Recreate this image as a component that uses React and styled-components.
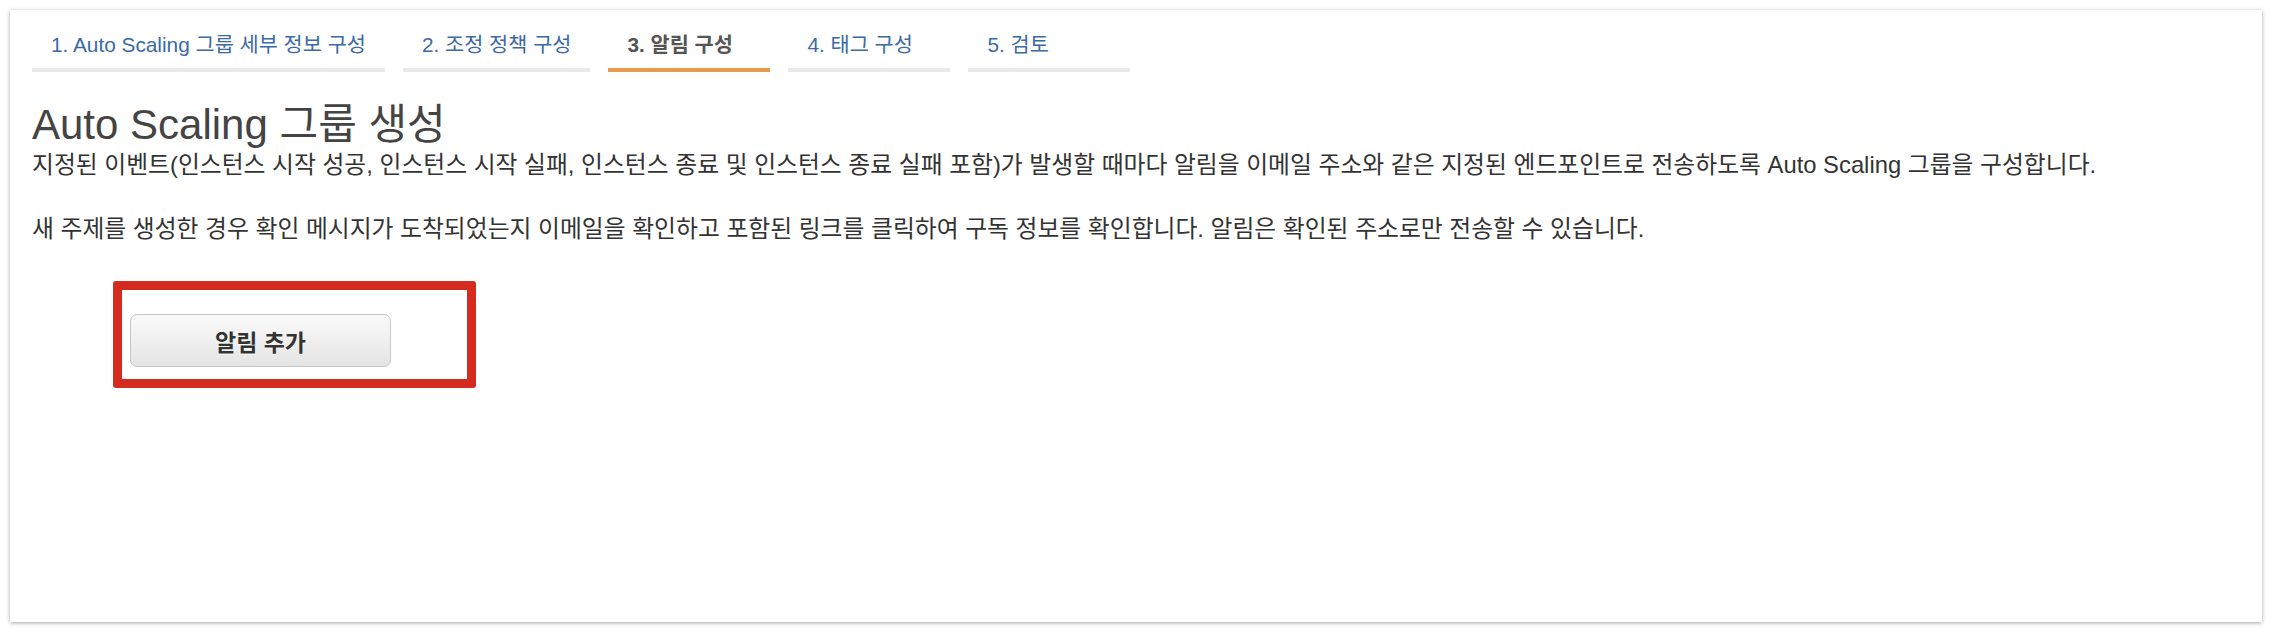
import React from 'react'
import styled, { createGlobalStyle } from 'styled-components'

const GlobalStyle = createGlobalStyle`
  html, body {
    margin: 0;
    padding: 0;
    background: #fff;
  }

  body {
    font-family: "Liberation Sans", "Noto Sans CJK KR", sans-serif;
    color: #333;
  }
`

const Card = styled.div`
  box-sizing: border-box;
  margin: 10px;
  height: 612px;
  padding: 0 22px;
  background: #fff;
  box-shadow: 0 1px 4px rgba(0, 0, 0, 0.35);
  overflow: hidden;
`

const Steps = styled.div`
  display: flex;
  gap: 18px;
  padding-top: 23px;
`

const Step = styled.div`
  box-sizing: border-box;
  min-width: 162px;
  padding: 0 19px 11px;
  font-size: 20.8px;
  line-height: 24px;
  white-space: nowrap;
  color: ${({ $active }) => ($active ? '#555' : '#3b6aa5')};
  font-weight: ${({ $active }) => ($active ? 'bold' : 'normal')};
  border-bottom: 4px solid ${({ $active }) => ($active ? '#e8984c' : '#e9e9e9')};
`

const Title = styled.h1`
  margin: 29px 0 1px;
  font-size: 42px;
  line-height: 48px;
  font-weight: normal;
  color: #444;
`

const Text = styled.p`
  margin: ${({ $gap }) => $gap || 0}px 0 0;
  font-size: 23.8px;
  line-height: 30px;
  color: #333;
`

const Highlight = styled.div`
  display: inline-block;
  margin: 37px 0 0 81px;
  padding: 24px 76px 12px 8px;
  border: 9px solid #d52b1e;
  border-radius: 3px;
`

const Button = styled.button`
  display: block;
  width: 261px;
  height: 53px;
  border: 1px solid #c6c6c6;
  border-radius: 7px;
  background: linear-gradient(#fafafa, #e4e4e4);
  font-family: inherit;
  font-size: 23px;
  font-weight: bold;
  color: #333;
  text-shadow: 0 1px 0 #fff;
  cursor: pointer;
`

const steps = [
  '1. Auto Scaling 그룹 세부 정보 구성',
  '2. 조정 정책 구성',
  '3. 알림 구성',
  '4. 태그 구성',
  '5. 검토',
]

const App = () => {
  return (
    <>
      <GlobalStyle />
      <Card>
        <Steps>
          {steps.map((s, i) => (
            <Step key={s} $active={i === 2}>
              {s}
            </Step>
          ))}
        </Steps>

        <Title>Auto Scaling 그룹 생성</Title>
        <Text>
          지정된 이벤트(인스턴스 시작 성공, 인스턴스 시작 실패, 인스턴스 종료 및 인스턴스 종료 실패 포함)가 발생할 때마다 알림을 이메일 주소와 같은 지정된 엔드포인트로 전송하도록 Auto Scaling 그룹을 구성합니다.
        </Text>
        <Text $gap={34}>
          새 주제를 생성한 경우 확인 메시지가 도착되었는지 이메일을 확인하고 포함된 링크를 클릭하여 구독 정보를 확인합니다. 알림은 확인된 주소로만 전송할 수 있습니다.
        </Text>

        <Highlight>
          <Button>알림 추가</Button>
        </Highlight>
      </Card>
    </>
  )
}

export default App
